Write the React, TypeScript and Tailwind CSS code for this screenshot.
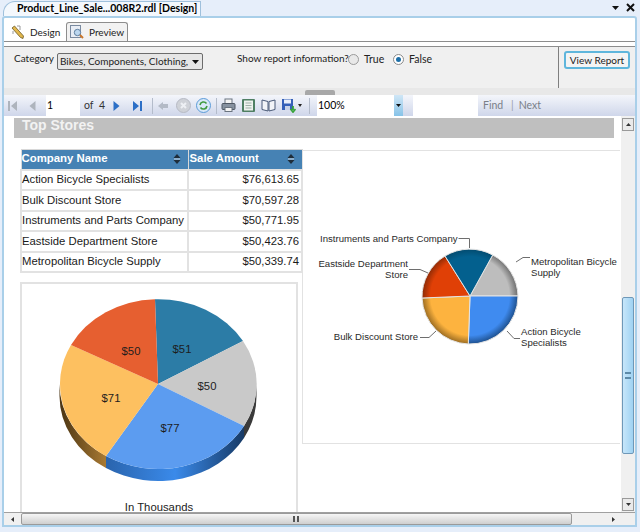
import React from "react";

const ui = { fontFamily: 'Lato, "Noto Sans", "Liberation Sans", sans-serif' };
const ar = { fontFamily: '"Liberation Sans", Arial, sans-serif' };

function pt(cx: number, cy: number, x: number, y: number) {
  return `M${cx} ${cy} L${x} ${y}`;
}

function Sort() {
  return (
    <svg width="8" height="10" viewBox="0 0 8 10" className="shrink-0">
      <path d="M4 0 L7.5 4 H0.5 Z M0.5 6 H7.5 L4 10 Z" fill="#1f2d3a" />
      <path d="M1 4.5 H7 V5.5 H1 Z" fill="#cfd8e2" />
    </svg>
  );
}

function Sep() {
  return <div className="w-px h-[16px] bg-[#b4bccb] shrink-0" />;
}

function FirstIcon({ flip = false, color = "#aeb4bd" }: { flip?: boolean; color?: string }) {
  return (
    <svg width="10" height="12" viewBox="0 0 10 12" style={{ transform: flip ? "scaleX(-1)" : undefined }}>
      <path d="M0 1 H2 V11 H0 Z M9 1 V11 L3 6 Z" fill={color} />
    </svg>
  );
}

function PrevIcon({ flip = false, color = "#aeb4bd" }: { flip?: boolean; color?: string }) {
  return (
    <svg width="7" height="12" viewBox="0 0 7 12" style={{ transform: flip ? "scaleX(-1)" : undefined }}>
      <path d="M6.5 1 V11 L0.5 6 Z" fill={color} />
    </svg>
  );
}

function Row({ name, amt, tall }: { name: string; amt: string; tall?: boolean }) {
  return (
    <tr className={tall ? "h-[21px]" : "h-[20px]"}>
      <td className="border-2 border-[#e2e2e2] pl-0 pt-0 pb-[1px] text-[11.3px] leading-[16px] text-[#1a1a1a] whitespace-nowrap">{name}</td>
      <td className="border-2 border-[#e2e2e2] pr-[2px] pt-0 pb-[1px] text-[11.3px] leading-[16px] text-[#1a1a1a] text-right whitespace-nowrap">{amt}</td>
    </tr>
  );
}

function BigPie() {
  const cx = 138;
  const cy = 102;
  const rx = 98.5;
  const ry = 85;
  const d = 12;
  const top = (x: number, y: number, x2: number, y2: number, fill: string) => (
    <path d={`${pt(cx, cy, x, y)} A${rx} ${ry} 0 0 1 ${x2} ${y2} Z`} fill={fill} />
  );
  return (
    <svg width="274" height="216" viewBox="2 2 274 216" className="block" style={ar}>
      <defs>
        <linearGradient id="sideY" x1="0" x2="1">
          <stop offset="0" stopColor="#4a3413" />
          <stop offset="1" stopColor="#a97a33" />
        </linearGradient>
        <linearGradient id="sideB" x1="0" x2="1">
          <stop offset="0" stopColor="#2a64ad" />
          <stop offset="0.5" stopColor="#3a8aea" />
          <stop offset="1" stopColor="#173a66" />
        </linearGradient>
      </defs>
      <path d={`M${cx - rx} ${cy} A${rx} ${ry} 0 0 0 86 ${cy + 72} V${cy + 72 + d} A${rx} ${ry} 0 0 1 ${cx - rx} ${cy + d} Z`} fill="url(#sideY)" />
      <path d={`M86 ${cy + 72} A${rx} ${ry} 0 0 0 224 ${cy + 42} V${cy + 42 + d} A${rx} ${ry} 0 0 1 86 ${cy + 72 + d} Z`} fill="url(#sideB)" />
      <path d={`M224 ${cy + 42} A${rx} ${ry} 0 0 0 ${cx + rx} ${cy} V${cy + d} A${rx} ${ry} 0 0 1 224 ${cy + 42 + d} Z`} fill="#3a3a3a" />
      {top(135, 17.2, 223, 59, "#2c7ca6")}
      {top(223, 59, 224, 144, "#c9c9c9")}
      {top(224, 144, 86, 174, "#5c9cf0")}
      {top(86, 174, 51, 63, "#fdc060")}
      {top(51, 63, 135, 17.2, "#e65f30")}
      <g fontSize="11.3" fill="#1d1d1d" textAnchor="middle">
        <text x="111" y="73">$50</text>
        <text x="162" y="71">$51</text>
        <text x="187" y="108">$50</text>
        <text x="91" y="120">$71</text>
        <text x="150" y="150">$77</text>
      </g>
    </svg>
  );
}

function SmallPie() {
  const cx = 168;
  const cy = 146;
  const r = 48;
  const s = (x: number, y: number, x2: number, y2: number, fill: string) => (
    <path d={`${pt(cx, cy, x, y)} A${r} ${r} 0 0 1 ${x2} ${y2} Z`} fill={fill} stroke="#e4e4e4" strokeWidth="1" />
  );
  return (
    <svg width="316" height="290" viewBox="1 1 316 290" className="block" style={ar}>
      <defs>
        <radialGradient id="gBlue" gradientUnits="userSpaceOnUse" cx={cx} cy={cy} r={r}>
          <stop offset="0.82" stopColor="#3f8bf0" />
          <stop offset="1" stopColor="#1d4f8c" />
        </radialGradient>
        <radialGradient id="gYel" gradientUnits="userSpaceOnUse" cx={cx} cy={cy} r={r}>
          <stop offset="0.82" stopColor="#fdb33f" />
          <stop offset="1" stopColor="#9b6c22" />
        </radialGradient>
        <radialGradient id="gRed" gradientUnits="userSpaceOnUse" cx={cx} cy={cy} r={r}>
          <stop offset="0.82" stopColor="#e04006" />
          <stop offset="1" stopColor="#8a2a06" />
        </radialGradient>
        <radialGradient id="gTeal" gradientUnits="userSpaceOnUse" cx={cx} cy={cy} r={r}>
          <stop offset="0.82" stopColor="#03608e" />
          <stop offset="1" stopColor="#03486b" />
        </radialGradient>
        <radialGradient id="gGray" gradientUnits="userSpaceOnUse" cx={cx} cy={cy} r={r}>
          <stop offset="0.82" stopColor="#bdbdbd" />
          <stop offset="1" stopColor="#6c6c6c" />
        </radialGradient>
      </defs>
      {s(190.7, 105, 216, 146, "url(#gGray)")}
      {s(216, 146, 166.3, 194, "url(#gBlue)")}
      {s(166.3, 194, 120, 148, "url(#gYel)")}
      {s(120, 148, 143, 106, "url(#gRed)")}
      {s(143, 106, 190.7, 105, "url(#gTeal)")}
      <g fill="none" stroke="#6e6e6e" strokeWidth="1">
        <path d="M156.5 88.5 H167.5 V98" />
        <path d="M107 119.5 H118 L126 123" />
        <path d="M214 112 L221 107.5 H228" />
        <path d="M205 181 L212 188.5 H218" />
        <path d="M118 187.5 H127 L134 181" />
      </g>
      <g fontSize="9.6" fill="#2a2a2a">
        <text x="18" y="92">Instruments and Parts Company</text>
        <text x="106" y="117" textAnchor="end">Eastside Department</text>
        <text x="106" y="128" textAnchor="end">Store</text>
        <text x="229" y="115">Metropolitan Bicycle</text>
        <text x="229" y="126">Supply</text>
        <text x="219" y="185">Action Bicycle</text>
        <text x="219" y="196">Specialists</text>
        <text x="116" y="190" textAnchor="end">Bulk Discount Store</text>
      </g>
    </svg>
  );
}

export default function App() {
  return (
    <div className="w-[640px] h-[532px] bg-[#e6eefa] flex flex-col overflow-hidden" style={ui}>
      <div className="h-[16px] flex items-end shrink-0 pl-[3px] pr-[5px]">
        <div className="w-[198px] h-[15px] bg-[#f4f8fd] border border-b-0 border-[#9fc0dc] rounded-tl-[12px] pl-[13px] text-[10.5px] leading-[13px] font-bold text-black whitespace-nowrap overflow-hidden">
          Product_Line_Sale...008R2.rdl [Design]
        </div>
        <div className="ml-auto flex items-center gap-[6px] h-[15px] pb-[2px]">
          <svg width="8" height="4" viewBox="0 0 8 4"><path d="M0 0 H7 L3.5 4 Z" fill="#111" /></svg>
          <svg width="9" height="9" viewBox="0 0 9 9"><path d="M1 1 L8 8 M8 1 L1 8" stroke="#111" strokeWidth="2" /></svg>
        </div>
      </div>
      <div className="flex-1 min-h-0 ml-[2px] mr-[3px] mb-[5px] border-2 border-[#a9cfe9] bg-white flex flex-col rounded-t-[3px]">
        <div className="h-[22px] shrink-0 flex items-end pl-[3px] border-b border-[#8d8d8d] mt-[2px] text-[10px] text-[#222]">
          <div className="w-[59px] h-[18px] flex items-center gap-[6px] pl-[4px] whitespace-nowrap">
            <svg width="13" height="14" viewBox="0 0 13 14">
              <path d="M1 3 L3.5 1 L12.5 11 L12 13.5 L9.5 12.5 Z" fill="#e2b74c" stroke="#6b5a2a" strokeWidth="0.8" />
              <path d="M6 1 H9 V5 M2 6 V9" stroke="#9a9a9a" fill="none" />
            </svg>
            Design
          </div>
          <div className="w-[62px] h-[19px] flex items-center gap-[5px] pl-[3px] bg-[#f2f2f2] border border-b-0 border-[#8d8d8d] rounded-t-[3px] whitespace-nowrap">
            <svg width="14" height="14" viewBox="0 0 14 14">
              <rect x="0.5" y="0.5" width="10" height="12" fill="#e8edf5" stroke="#7a8aa0" />
              <circle cx="7.5" cy="7.5" r="3.2" fill="#bcd7f0" stroke="#5f7f9f" />
              <path d="M10 10 L13 13" stroke="#c9762b" strokeWidth="2" />
            </svg>
            Preview
          </div>
        </div>
        <div className="h-[42px] shrink-0 flex bg-[#f0f0f0] text-[10px] text-[#222] border-t border-[#8d8d8d] mt-[4px]">
          <div className="flex-1 flex items-start whitespace-nowrap">
            <span className="ml-[10px] mt-[4px] w-[39px]">Category</span>
            <div className="ml-[4px] mt-[6px] w-[146px] h-[17px] border border-[#6c6c6c] rounded-[2px] bg-[#e6e6e6] flex items-center pl-[2px] pr-[3px] overflow-hidden">
              <span className="w-[131px] overflow-hidden whitespace-nowrap">Bikes, Components, Clothing, A</span>
              <svg width="7" height="4" viewBox="0 0 7 4" className="ml-[3px] shrink-0"><path d="M0 0 H7 L3.5 4 Z" fill="#111" /></svg>
            </div>
            <span className="ml-[34px] mt-[4px] w-[107px]">Show report information?</span>
            <div className="ml-[4px] mt-[7px] w-[11px] h-[11px] rounded-full border border-[#9a9a9a] bg-[#e8e8e8] shrink-0" />
            <span className="ml-[5px] mt-[5px] w-[24px] text-[10.5px]">True</span>
            <div className="ml-[5px] mt-[7px] w-[11px] h-[11px] rounded-full border border-[#8a8a8a] bg-white flex items-center justify-center shrink-0">
              <div className="w-[5px] h-[5px] rounded-full bg-[#1d6fa8]" />
            </div>
            <span className="ml-[5px] mt-[5px] text-[10.5px]">False</span>
          </div>
          <div className="w-[77px] border-l border-[#7f7f7f] shrink-0 pl-[5px] pt-[4px]">
            <div className="w-[66px] h-[18px] border-2 border-[#5fb6dc] rounded-[3px] bg-[#f4f4f4] flex items-center justify-center text-[10px] whitespace-nowrap">View Report</div>
          </div>
        </div>
        <div className="h-[7px] shrink-0 bg-[#e8e8e8] flex justify-center">
          <div className="w-[30px] h-[5px] mt-[2px] bg-[#a8a8a8] rounded-t-[2px]" />
        </div>
        <div className="h-[21px] shrink-0 flex items-center bg-gradient-to-b from-[#f4f6fb] to-[#cfd6ea] text-[10.5px] text-[#333]">
          <div className="ml-[4px] flex"><FirstIcon /></div>
          <div className="ml-[11px] flex"><PrevIcon /></div>
          <div className="ml-[10px] w-[34px] h-[21px] bg-white pl-[1px] leading-[21px] text-black">1</div>
          <span className="ml-[4px] w-[10px]">of</span>
          <span className="ml-[5px] w-[7px]">4</span>
          <div className="ml-[7px] flex"><PrevIcon flip color="#2c6fc6" /></div>
          <div className="ml-[12px] flex"><FirstIcon flip color="#2c6fc6" /></div>
          <div className="ml-[10px]"><Sep /></div>
          <svg className="ml-[5px]" width="10" height="10" viewBox="0 0 10 10"><path d="M5 1 V3 H10 V7 H5 V9 L0 5 Z" fill="#b3bac6" /></svg>
          <svg className="ml-[8px]" width="15" height="15" viewBox="0 0 15 15"><circle cx="7.5" cy="7.5" r="7" fill="#cfd2d8" stroke="#b6bac4" /><path d="M5 5 L10 10 M10 5 L5 10" stroke="#eef0f4" strokeWidth="2" /></svg>
          <svg className="ml-[5px]" width="15" height="15" viewBox="0 0 15 15"><circle cx="7.5" cy="7.5" r="7" fill="#d8e8f8" stroke="#5b9bd8" /><path d="M4 7 A3.6 3.6 0 0 1 10.5 5.5 M11 8 A3.6 3.6 0 0 1 4.5 9.5" fill="none" stroke="#3f9a3f" strokeWidth="1.6" /></svg>
          <div className="ml-[5px]"><Sep /></div>
          <svg className="ml-[4px]" width="15" height="15" viewBox="0 0 15 15"><rect x="4" y="1" width="7" height="5" fill="#f4f4f4" stroke="#6a7480" /><rect x="1" y="5.5" width="13" height="6" rx="1" fill="#8792a0" stroke="#4f5864" /><rect x="4" y="9.5" width="7" height="4" fill="#f4f4f4" stroke="#6a7480" /></svg>
          <svg className="ml-[5px]" width="15" height="15" viewBox="0 0 15 15"><rect x="1" y="1" width="13" height="13" rx="1" fill="#4f7f63" /><rect x="3" y="2.5" width="9" height="10" fill="#eef2ee" /><path d="M4.5 5 H10.5 M4.5 7.5 H10.5 M4.5 10 H10.5" stroke="#9fb0a8" /></svg>
          <svg className="ml-[5px]" width="15" height="15" viewBox="0 0 15 15"><path d="M1 2 L7 3.5 V13 L1 11.5 Z M14 2 L8 3.5 V13 L14 11.5 Z" fill="#f2f4f8" stroke="#4a5a78" /></svg>
          <svg className="ml-[5px]" width="15" height="15" viewBox="0 0 15 15"><rect x="1" y="1" width="11" height="11" fill="#3560b8" /><rect x="3" y="1.5" width="7" height="4" fill="#e8eefa" /><rect x="4" y="8" width="5" height="4" fill="#c8d2e8" /><path d="M12 8 V12 M9.5 11 L12 14 L14.5 11" fill="none" stroke="#37a33a" strokeWidth="1.8" /></svg>
          <svg className="ml-[2px]" width="4" height="3" viewBox="0 0 4 3"><path d="M0 0 H4 L2 3 Z" fill="#222" /></svg>
          <div className="ml-[7px]"><Sep /></div>
          <div className="ml-[7px] w-[86px] h-[21px] bg-white flex items-center pl-[1px] text-black">
            <span className="flex-1">100%</span>
            <div className="w-[9px] h-[21px] bg-gradient-to-b from-[#cfe6f6] to-[#86c3e8] flex items-center justify-center">
              <svg width="5" height="3" viewBox="0 0 5 3"><path d="M0 0 H5 L2.5 3 Z" fill="#111" /></svg>
            </div>
          </div>
          <div className="w-[10px]" />
          <div className="w-[65px] h-[21px] bg-white" />
          <span className="ml-[5px] w-[20px] text-[#7a7f88]">Find</span>
          <span className="ml-[8px] text-[#9aa0aa]">|</span>
          <span className="ml-[5px] text-[#7a7f88]">Next</span>
        </div>
        <div className="flex-1 min-h-0 flex">
          <div className="flex-1 min-w-0 overflow-hidden bg-white" style={ar}>
            <div className="mt-[2px] ml-[10px] w-[600px] h-[20px] bg-[#bfbfbf] pl-[8px] text-[14px] font-bold leading-[15px] text-[#f2f2f2]">Top Stores</div>
            <div className="flex mt-[12px] ml-[16px]">
              <div className="w-[282px] shrink-0 -mt-[1px]">
                <table className="w-[281px] border-collapse table-fixed">
                  <colgroup>
                    <col className="w-[167px]" />
                    <col className="w-[114px]" />
                  </colgroup>
                  <thead>
                    <tr className="h-[20px] bg-[#4682b4] text-white text-[11.4px] font-bold">
                      <th className="border border-[#d8d8d8] pl-0 pt-0 pb-[1px] text-left font-bold">
                        <div className="flex items-center justify-between pr-[7px]">Company Name<Sort /></div>
                      </th>
                      <th className="border border-[#d8d8d8] pl-[1px] pt-0 pb-[1px] text-left font-bold">
                        <div className="flex items-center justify-between pr-[7px]">Sale Amount<Sort /></div>
                      </th>
                    </tr>
                  </thead>
                  <tbody>
                    <Row name="Action Bicycle Specialists" amt="$76,613.65" />
                    <Row name="Bulk Discount Store" amt="$70,597.28" tall />
                    <Row name="Instruments and Parts Company" amt="$50,771.95" />
                    <Row name="Eastside Department Store" amt="$50,423.76" tall />
                    <Row name="Metropolitan Bicycle Supply" amt="$50,339.74" />
                  </tbody>
                </table>
                <div className="mt-[9px] w-[278px] border-2 border-b-0 border-[#e2e2e2]">
                  <BigPie />
                  <div className="text-center text-[11.3px] text-[#222] leading-[14px]">In Thousands</div>
                </div>
              </div>
              <div className="w-[318px] h-[294px] shrink-0 border border-[#e2e2e2] border-r-0">
                <SmallPie />
              </div>
            </div>
          </div>
          <div className="w-[14px] shrink-0 bg-[#f0f0f0] flex flex-col items-center pt-[2px]">
            <div className="w-[12px] h-[13px] border border-[#9a9a9a] bg-[#eaeaea] flex items-center justify-center">
              <svg width="5" height="3" viewBox="0 0 5 3"><path d="M0 3 H5 L2.5 0 Z" fill="#333" /></svg>
            </div>
            <div className="mt-[166px] w-[12px] h-[157px] border border-[#6f98b8] rounded-[2px] bg-gradient-to-r from-[#c7e6fa] to-[#9fd2f2] flex items-center justify-center">
              <div className="w-[6px] h-[7px] border-y-2 border-[#5d8aa8]" />
            </div>
            <div className="mt-[44px] w-[12px] h-[13px] border border-[#9a9a9a] bg-[#eaeaea] flex items-center justify-center">
              <svg width="5" height="3" viewBox="0 0 5 3"><path d="M0 0 H5 L2.5 3 Z" fill="#333" /></svg>
            </div>
          </div>
        </div>
        <div className="h-[13px] shrink-0 flex items-center bg-[#f0f0f0] border-t border-[#a0a0a0]">
          <div className="w-[17px] flex justify-center"><svg width="3" height="5" viewBox="0 0 3 5"><path d="M3 0 V5 L0 2.5 Z" fill="#333" /></svg></div>
          <div className="w-[551px] h-[12px] border border-[#9a9a9a] rounded-[2px] bg-gradient-to-b from-[#f6f6f6] to-[#cfcfcf] flex items-center justify-end pr-[272px]">
            <div className="w-[6px] h-[6px] border-x-2 border-[#555]" />
          </div>
          <div className="ml-[40px] flex"><svg width="3" height="5" viewBox="0 0 3 5"><path d="M0 0 V5 L3 2.5 Z" fill="#333" /></svg></div>
        </div>
      </div>
    </div>
  );
}
